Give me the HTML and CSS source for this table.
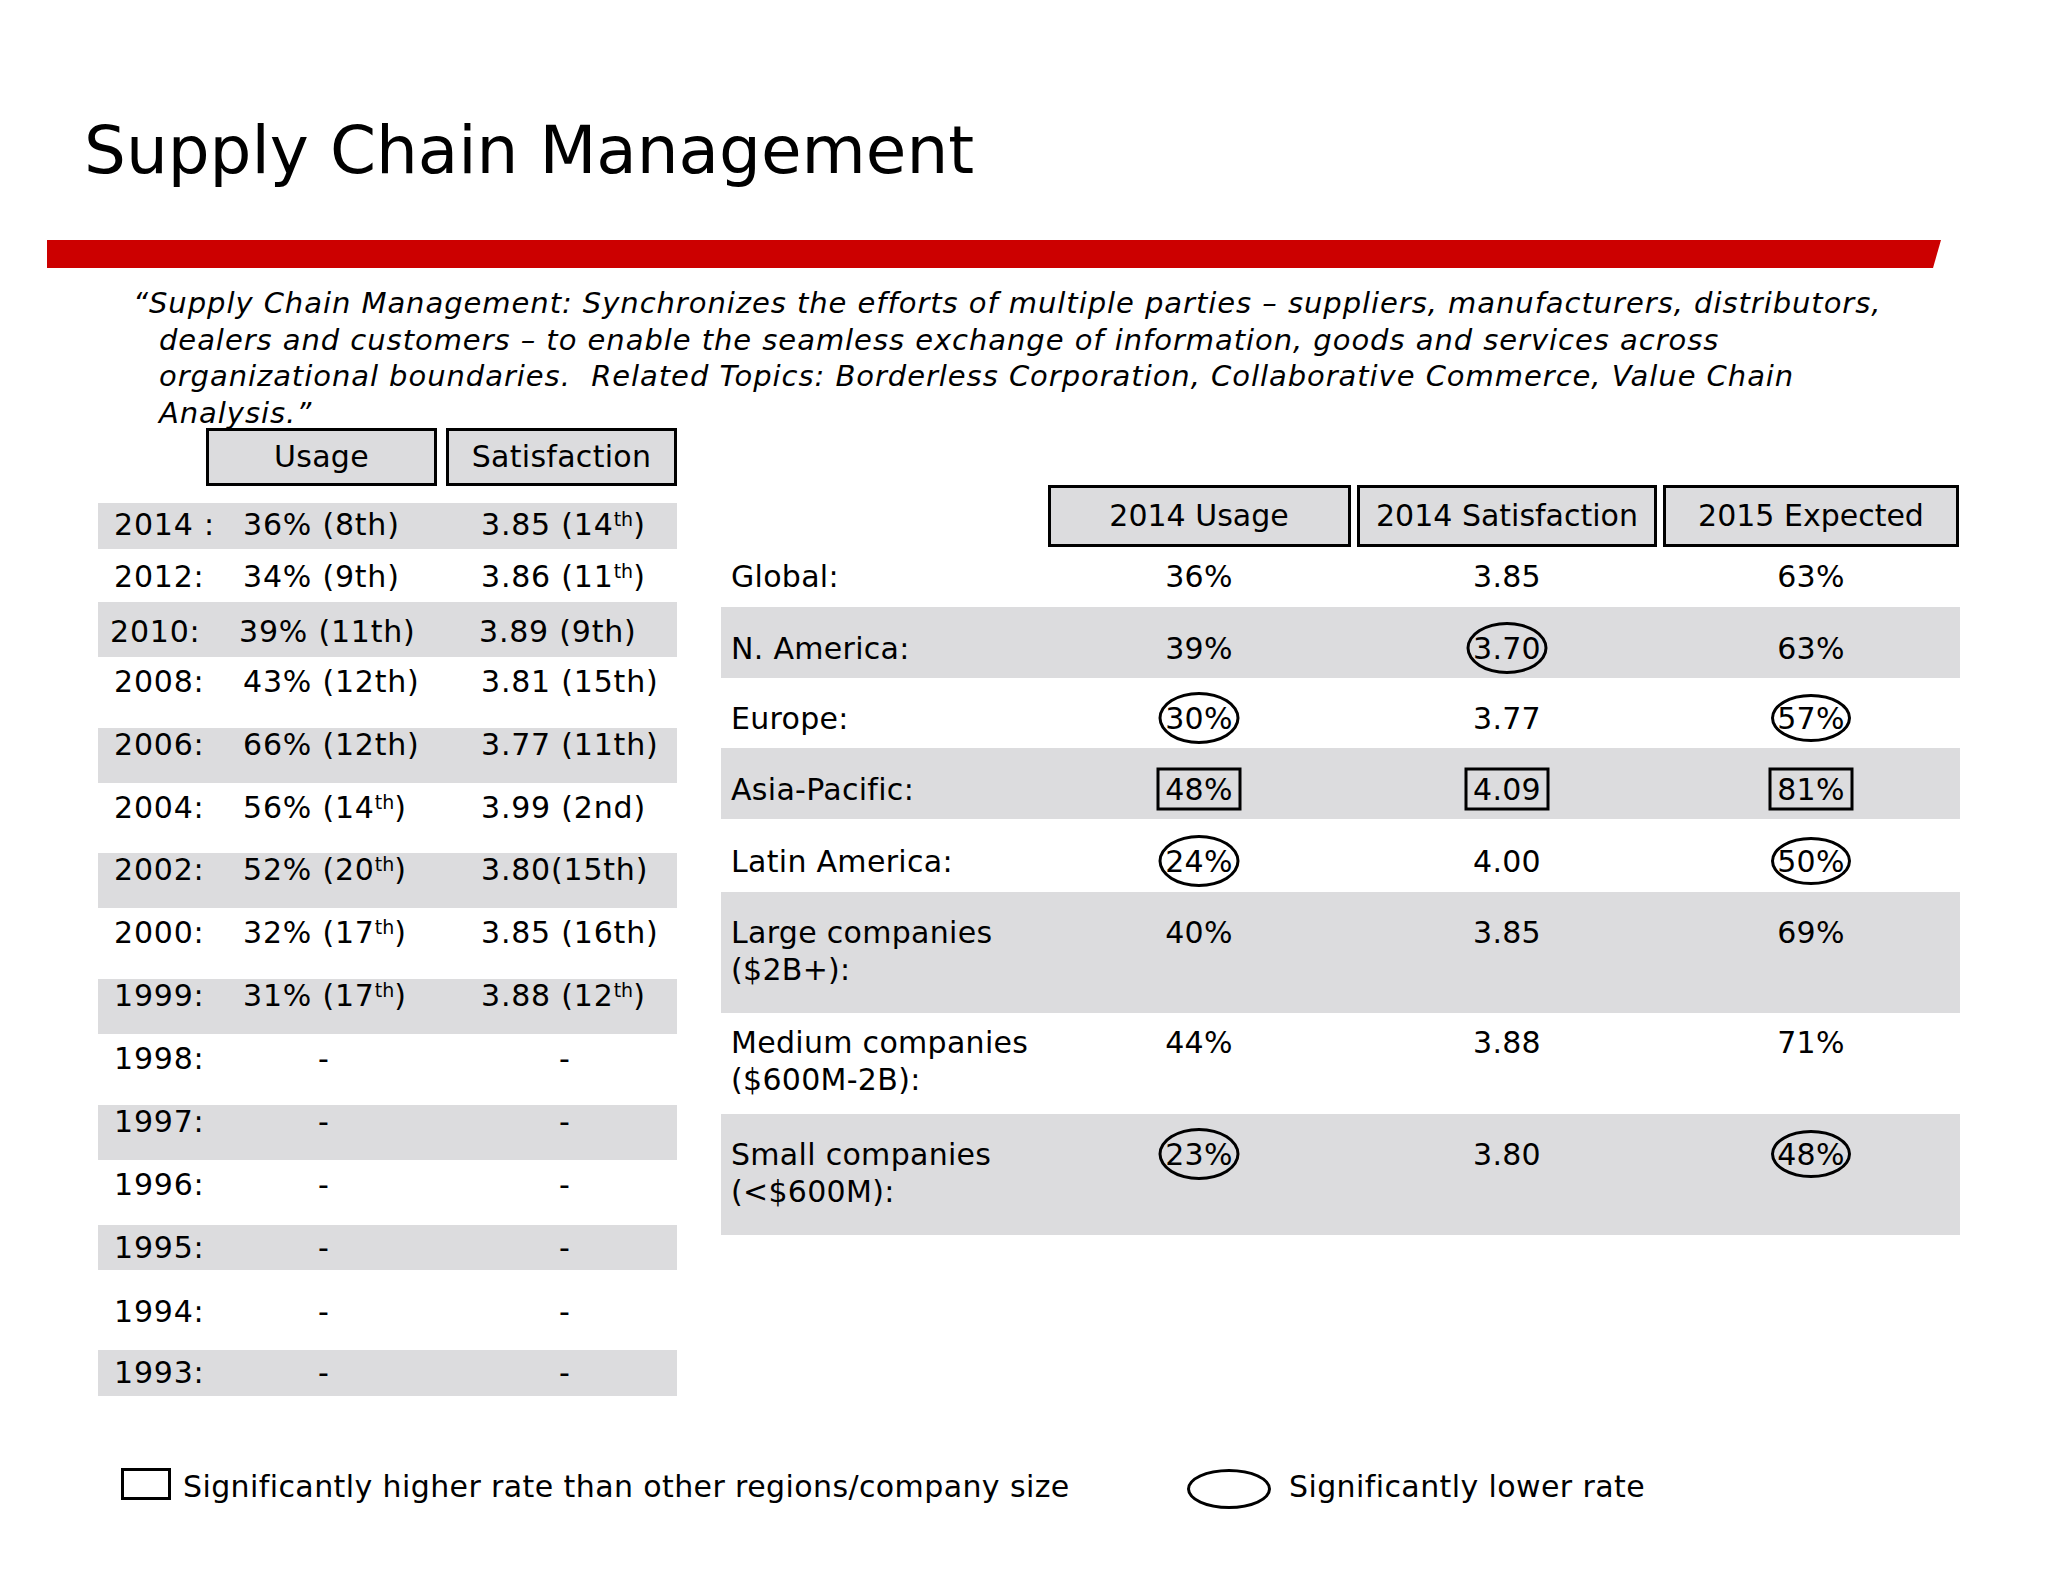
FILE: index.html
```html
<!DOCTYPE html>
<html lang="en">
<head>
<meta charset="utf-8">
<title>Supply Chain Management</title>
<link rel="stylesheet" href="styles.css">
</head>
<body>
<div class="slide">
  <h1 class="title">Supply Chain Management</h1>
  <div class="rule"></div>
  <p class="quote">“Supply Chain Management: Synchronizes the efforts of multiple parties – suppliers, manufacturers, distributors,<br>dealers and customers – to enable the seamless exchange of information, goods and services across<br>organizational boundaries.&nbsp; Related Topics: Borderless Corporation, Collaborative Commerce, Value Chain<br>Analysis.”</p>

  <div class="content">
    <section class="history">
      <div class="hist-head">
        <div class="hbox">Usage</div>
        <div class="hbox">Satisfaction</div>
      </div>
      <div class="hist-rows">
        <div class="hrow alt top-row"><span class="yr">2014 :</span><span class="u">36% (8th)</span><span class="s">3.85 (14<sup>th</sup>)</span></div>
        <div class="hrow second-row"><span class="yr">2012:</span><span class="u">34% (9th)</span><span class="s">3.86 (11<sup>th</sup>)</span></div>
        <div class="hrow alt third-row"><span class="yr">2010:</span><span class="u">39% (11th)</span><span class="s">3.89 (9th)</span></div>
        <div class="hrow"><span class="yr">2008:</span><span class="u">43% (12th)</span><span class="s">3.81 (15th)</span></div>
        <div class="hrow alt"><span class="yr">2006:</span><span class="u">66% (12th)</span><span class="s">3.77 (11th)</span></div>
        <div class="hrow narrow"><span class="yr">2004:</span><span class="u">56% (14<sup>th</sup>)</span><span class="s">3.99 (2nd)</span></div>
        <div class="hrow alt"><span class="yr">2002:</span><span class="u">52% (20<sup>th</sup>)</span><span class="s">3.80(15th)</span></div>
        <div class="hrow"><span class="yr">2000:</span><span class="u">32% (17<sup>th</sup>)</span><span class="s">3.85 (16th)</span></div>
        <div class="hrow alt"><span class="yr">1999:</span><span class="u">31% (17<sup>th</sup>)</span><span class="s">3.88 (12<sup>th</sup>)</span></div>
        <div class="hrow"><span class="yr">1998:</span><span class="u dash">-</span><span class="s dash">-</span></div>
        <div class="hrow alt"><span class="yr">1997:</span><span class="u dash">-</span><span class="s dash">-</span></div>
        <div class="hrow mid-row"><span class="yr">1996:</span><span class="u dash">-</span><span class="s dash">-</span></div>
        <div class="hrow alt thin"><span class="yr">1995:</span><span class="u dash">-</span><span class="s dash">-</span></div>
        <div class="hrow tall"><span class="yr">1994:</span><span class="u dash">-</span><span class="s dash">-</span></div>
        <div class="hrow alt thin last"><span class="yr">1993:</span><span class="u dash">-</span><span class="s dash">-</span></div>
      </div>
    </section>

    <section class="regions">
      <div class="reg-head">
        <div></div>
        <div class="rbox b1">2014 Usage</div>
        <div class="rbox b2">2014 Satisfaction</div>
        <div class="rbox b3">2015 Expected</div>
      </div>
      <div class="rrow first"><span class="lbl">Global:</span><span class="val">36%</span><span class="val">3.85</span><span class="val">63%</span></div>
      <div class="rrow alt"><span class="lbl">N. America:</span><span class="val">39%</span><span class="val"><span class="mark oval">3.70</span></span><span class="val">63%</span></div>
      <div class="rrow eu"><span class="lbl">Europe:</span><span class="val"><span class="mark oval">30%</span></span><span class="val">3.77</span><span class="val"><span class="mark oval flat">57%</span></span></div>
      <div class="rrow alt"><span class="lbl">Asia-Pacific:</span><span class="val"><span class="mark sq">48%</span></span><span class="val"><span class="mark sq">4.09</span></span><span class="val"><span class="mark sq">81%</span></span></div>
      <div class="rrow la"><span class="lbl">Latin America:</span><span class="val"><span class="mark oval">24%</span></span><span class="val">4.00</span><span class="val"><span class="mark oval flat">50%</span></span></div>
      <div class="rrow alt two"><span class="lbl">Large companies<br>($2B+):</span><span class="val">40%</span><span class="val">3.85</span><span class="val">69%</span></div>
      <div class="rrow medium"><span class="lbl">Medium companies<br>($600M-2B):</span><span class="val">44%</span><span class="val">3.88</span><span class="val">71%</span></div>
      <div class="rrow alt two"><span class="lbl">Small companies<br>(&lt;$600M):</span><span class="val"><span class="mark oval">23%</span></span><span class="val">3.80</span><span class="val"><span class="mark oval flat">48%</span></span></div>
    </section>
  </div>

  <div class="legend">
    <div class="legend-item hi"><span class="key-box"></span><span class="key-text">Significantly higher rate than other regions/company size</span></div>
    <div class="legend-item lo"><span class="key-oval"></span><span class="key-text">Significantly lower rate</span></div>
  </div>
</div>
</body>
</html>
```

FILE: styles.css
```css
*, *::before, *::after { box-sizing: border-box; }

html, body {
  margin: 0;
  background: #ffffff;
}

body {
  font-family: "DejaVu Sans", Verdana, sans-serif;
  color: #000000;
}

.slide {
  width: 2048px;
  height: 1582px;
  overflow: hidden;
  padding-top: 111px;
}

.title {
  margin: 0 0 0 84px;
  font-size: 66px;
  font-weight: normal;
  line-height: 80px;
  white-space: nowrap;
}

.rule {
  margin: 49px 0 0 47px;
  width: 1894px;
  height: 28px;
  background: #cc0000;
  clip-path: polygon(0 0, 100% 0, calc(100% - 8px) 100%, 0 100%);
}

.quote {
  margin: 17px 0 0;
  height: 143px;
  padding-left: 159px;
  text-indent: -26px;
  font-size: 29px;
  font-style: italic;
  line-height: 36.5px;
  letter-spacing: 0.95px;
  white-space: nowrap;
}

.content {
  display: flex;
  align-items: flex-start;
  gap: 44px;
  padding-left: 98px;
}

/* ---------- history table ---------- */
.history { width: 579px; }

.hist-head {
  display: flex;
  gap: 9px;
  padding-left: 108px;
  height: 58px;
}

.hbox {
  width: 231px;
  height: 58px;
  border: 3px solid #000;
  background: #dcdcde;
  font-size: 30px;
  line-height: 52px;
  text-align: center;
  letter-spacing: 0.3px;
}

.hist-rows { margin-top: 17px; }

.hrow {
  display: grid;
  grid-template-columns: 108px 235px 236px;
  height: 71px;
  padding-top: 10px;
  font-size: 30px;
  line-height: 30px;
  letter-spacing: 0.8px;
  white-space: nowrap;
}

.hrow.alt {
  background: #dcdcde;
  height: 55px;
  padding-top: 2px;
}

.hrow .yr { padding-left: 16px; }
.hrow .u { padding-left: 37px; }
.hrow .s { padding-left: 40px; }
.hrow .u.dash { padding-left: 112px; }
.hrow .s.dash { padding-left: 118px; }

.hrow.top-row { height: 46px; padding-top: 7px; }
.hrow.second-row { height: 53px; padding-top: 13px; }
.hrow.third-row { padding-top: 15px; }
.hrow.third-row .yr { padding-left: 12px; }
.hrow.third-row .u { padding-left: 33px; }
.hrow.third-row .s { padding-left: 38px; }
.hrow.narrow { height: 70px; }
.hrow.mid-row { height: 65px; }
.hrow.thin { height: 45px; padding-top: 8px; }
.hrow.tall { height: 80px; padding-top: 27px; }
.hrow.last { height: 46px; }

sup {
  font-size: 19px;
  line-height: 0;
  vertical-align: 9px;
  letter-spacing: 0;
}

/* ---------- regions table ---------- */
.regions {
  width: 1239px;
  padding-top: 57px;
}

.reg-head,
.rrow {
  display: grid;
  grid-template-columns: 325px 306px 310px 298px;
}

.reg-head { height: 62px; }

.rbox {
  justify-self: center;
  height: 62px;
  border: 3px solid #000;
  background: #dcdcde;
  font-size: 30px;
  line-height: 56px;
  text-align: center;
  white-space: nowrap;
}

.rbox.b1 { width: 303px; }
.rbox.b2 { width: 300px; }
.rbox.b3 { width: 296px; }

.rrow {
  height: 71px;
  padding-top: 23px;
  font-size: 30px;
  line-height: 37px;
  letter-spacing: 0.3px;
  white-space: nowrap;
}

.rrow.alt { background: #dcdcde; }
.rrow.first { height: 60px; padding-top: 11px; }
.rrow.eu { height: 70px; padding-top: 22px; }
.rrow.la { height: 73px; padding-top: 24px; }
.rrow.two { height: 121px; padding-top: 22px; }
.rrow.medium { height: 101px; padding-top: 11px; }

.rrow .lbl { padding-left: 10px; }
.rrow .val { text-align: center; }

.mark { position: relative; }

.mark::before {
  content: "";
  position: absolute;
  left: 50%;
  top: 50%;
  transform: translate(-50%, calc(-50% - 1px));
  border: 3px solid #000;
}

.oval::before {
  width: 81px;
  height: 52px;
  border-radius: 50%;
}

.oval.flat::before {
  width: 80px;
  height: 48px;
}

.sq::before {
  width: 85px;
  height: 43px;
}

/* ---------- legend ---------- */
.legend {
  display: flex;
  margin-top: 72px;
  padding-left: 121px;
}

.legend-item {
  display: flex;
  align-items: flex-start;
  gap: 12px;
  font-size: 30px;
  line-height: 36px;
  letter-spacing: 0.4px;
  white-space: nowrap;
}

.legend-item.hi { width: 1066px; }
.legend-item.lo { gap: 18px; }

.key-box {
  width: 50px;
  height: 32px;
  border: 3px solid #000;
}

.key-oval {
  width: 84px;
  height: 40px;
  margin-top: 1px;
  border: 3px solid #000;
  border-radius: 50%;
}

.key-text { margin-top: 1px; }
```
